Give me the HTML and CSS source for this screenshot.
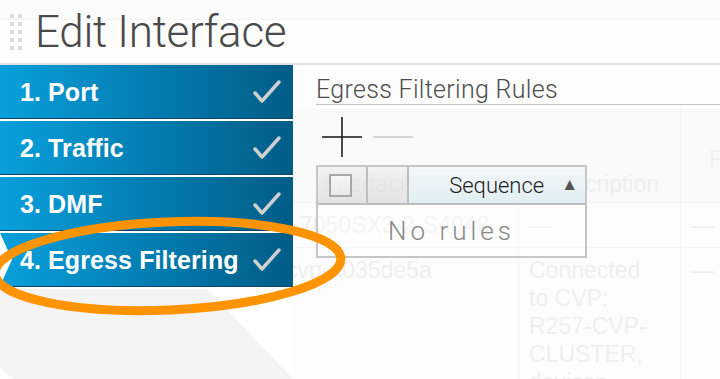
FILE: index.html
```html
<!DOCTYPE html>
<html lang="en">
<head>
    <meta charset="UTF-8" />
    <meta name="viewport" content="width=device-width, initial-scale=1.0" />
    <title>Edit Interface</title>
    <link rel="stylesheet" href="styles.css">
</head>
<body>
    <header class="page-header">
        <div class="grip">
            <span></span><span></span><span></span><span></span><span></span>
            <span></span><span></span><span></span><span></span><span></span>
        </div>
        <h1 class="page-title">Edit Interface</h1>
    </header>

    <div class="layout">
        <!-- Wizard steps -->
        <nav class="steps">
            <div class="step">
                <span class="step-label">1. Port</span>
                <svg class="step-check" width="28" height="24" viewBox="0 0 28 24"><polyline points="2,13 9,21 26,2" /></svg>
            </div>
            <div class="step">
                <span class="step-label">2. Traffic</span>
                <svg class="step-check" width="28" height="24" viewBox="0 0 28 24"><polyline points="2,13 9,21 26,2" /></svg>
            </div>
            <div class="step">
                <span class="step-label">3. DMF</span>
                <svg class="step-check" width="28" height="24" viewBox="0 0 28 24"><polyline points="2,13 9,21 26,2" /></svg>
            </div>
            <div class="step step--active">
                <span class="step-label">4. Egress Filtering</span>
                <svg class="step-check" width="28" height="24" viewBox="0 0 28 24"><polyline points="2,13 9,21 26,2" /></svg>
            </div>
            <div class="steps-fill"></div>
        </nav>

        <main class="content">
            <!-- Interface table behind the dialog -->
            <div class="backdrop">
                <div class="backdrop-head">
                    <div class="backdrop-cell backdrop-cell--name">Interface</div>
                    <div class="backdrop-cell backdrop-cell--desc">Description</div>
                    <div class="backdrop-cell backdrop-cell--last">Flow</div>
                </div>
                <div class="backdrop-row">
                    <div class="backdrop-cell">7050SX3-2-S4048</div>
                    <div class="backdrop-cell backdrop-cell--desc">—</div>
                    <div class="backdrop-cell backdrop-cell--last">—</div>
                </div>
                <div class="backdrop-row">
                    <div class="backdrop-cell backdrop-cell--shift">cvp-a035de5a</div>
                    <div class="backdrop-cell backdrop-cell--desc">Connected to CVP: R257-CVP-CLUSTER, devices</div>
                    <div class="backdrop-cell backdrop-cell--last">—</div>
                </div>
            </div>

            <!-- Egress filtering rules editor -->
            <section class="rules-panel">
                <h2 class="rules-title">Egress Filtering Rules</h2>
                <div class="rules-toolbar">
                    <svg class="tool-add" width="40" height="40" viewBox="0 0 40 40"><path d="M0 20H40M20 0V40" /></svg>
                    <svg class="tool-remove" width="40" height="40" viewBox="0 0 40 40"><path d="M0 20H40" /></svg>
                </div>
                <div class="rules-grid">
                    <div class="grid-head">
                        <div class="grid-col grid-col--check"><span class="checkbox"></span></div>
                        <div class="grid-col grid-col--blank"></div>
                        <div class="grid-col grid-col--seq">
                            <span class="seq-label">Sequence</span>
                            <span class="sort-arrow">▲</span>
                        </div>
                    </div>
                    <div class="grid-body">No rules</div>
                </div>
            </section>
        </main>
    </div>

    <!-- Annotation ring -->
    <svg class="callout" width="720" height="379" viewBox="0 0 720 379">
        <ellipse cx="168" cy="266" rx="173" ry="44" transform="rotate(-2.5 168 266)" />
    </svg>
</body>
</html>
```

FILE: styles.css
```css
/* General styles */
body {
    margin: 0;
    width: 720px;
    height: 379px;
    overflow: hidden;
    position: relative;
    background: #fdfdfd;
    font-family: "Liberation Sans", Arial, sans-serif;
}

.page-header {
    height: 63px;
    border-bottom: 2px solid #e4dfe0;
    display: flex;
    align-items: center;
    background: linear-gradient(#fbfbfb 0 19px, #f4f4f4 19px 20px, #fdfdfd 20px);
    box-sizing: content-box;
}

.grip {
    display: grid;
    grid-template-columns: 4px 4px;
    grid-auto-rows: 4px;
    gap: 4px;
    margin-left: 10px;
    margin-top: 1px;
}

.grip span {
    background: #dcdcdc;
}

.page-title {
    margin: 0 0 0 13px;
    font-family: Roboto, "Liberation Sans", sans-serif;
    font-weight: 300;
    font-size: 44px;
    color: #4a4a4a;
    letter-spacing: -0.3px;
}

.layout {
    display: flex;
    height: 314px;
}

/* Wizard steps */
.steps {
    width: 293px;
    display: flex;
    flex-direction: column;
    gap: 2px;
    background: #fff;
}

.step {
    height: 51px;
    border-bottom: 1px solid #0b4670;
    background: linear-gradient(to right, #08a0dc, #005c87);
    display: flex;
    align-items: center;
    justify-content: space-between;
    padding: 2px 12px 0 20px;
    box-sizing: content-box;
    color: #fff;
    position: relative;
}

.step-label {
    font-size: 25px;
    font-weight: 700;
    letter-spacing: 0.1px;
}

.step-check {
    margin-top: -2px;
}

.step-check polyline {
    fill: none;
    stroke: #cfcfcf;
    stroke-width: 3.5;
    stroke-linecap: round;
    stroke-linejoin: round;
}

.step--active::before {
    content: "";
    position: absolute;
    left: 0;
    top: 0;
    width: 12px;
    height: 100%;
    background: #fff;
    clip-path: polygon(0 0, 100% 50%, 0 100%);
}

.steps-fill {
    flex: 1;
    background: #f4f4f4;
    clip-path: polygon(0 0, 207px 0, 100% 100%, 14px 100%, 0 79px);
}

/* Interface table behind */
.content {
    flex: 1;
    position: relative;
    overflow: hidden;
}

.backdrop {
    padding-top: 43px;
    color: #efefef;
    font-size: 23px;
}

.backdrop-head,
.backdrop-row {
    display: grid;
    grid-template-columns: 225px 162px 1fr;
}

.backdrop-head {
    height: 94px;
    background: #fafafa;
    border-bottom: 1px solid #f3f3f3;
}

.backdrop-row {
    border-bottom: 1px solid #f5f5f5;
}

.backdrop-cell {
    padding: 8px 0 8px 7px;
    line-height: 28px;
    overflow: hidden;
    white-space: nowrap;
}

.backdrop-cell--desc,
.backdrop-cell--last {
    border-left: 1px solid #f3f3f3;
    padding-left: 10px;
}

.backdrop-row .backdrop-cell--desc {
    white-space: normal;
    width: 130px;
}

.backdrop-cell--shift {
    margin-left: -14px;
}

.backdrop-head .backdrop-cell {
    align-self: end;
    padding-bottom: 4px;
}

.backdrop-head .backdrop-cell--name {
    padding-left: 30px;
}

.backdrop-head .backdrop-cell--desc {
    padding-left: 25px;
}

.backdrop-head .backdrop-cell--last {
    align-self: stretch;
    display: flex;
    align-items: center;
    padding-left: 28px;
    padding-bottom: 0;
}

/* Rules editor */
.rules-panel {
    position: absolute;
    top: 0;
    left: 23px;
    right: 0;
}

.rules-title {
    margin: 0;
    padding-top: 11px;
    height: 28px;
    line-height: 28px;
    border-bottom: 1px solid #c4c4c4;
    font-family: Roboto, "Liberation Sans", sans-serif;
    font-weight: 300;
    font-size: 25px;
    color: #4d4d4d;
    letter-spacing: 0.3px;
}

.rules-toolbar {
    display: flex;
    gap: 11px;
    padding: 12px 0 8px 6px;
}

.tool-add path {
    stroke: #111;
    stroke-width: 1.5;
    fill: none;
}

.tool-remove path {
    stroke: #c8c8c8;
    stroke-width: 1.5;
    fill: none;
}

.rules-grid {
    width: 267px;
    border: 2px solid #c6c6c6;
}

.grid-head {
    height: 36px;
    display: flex;
    border-bottom: 2px solid #bdbdbd;
}

.grid-col {
    display: flex;
    align-items: center;
    background: linear-gradient(rgba(232, 232, 232, 0.45), rgba(205, 205, 205, 0.5));
}

.grid-col--check {
    width: 48px;
    border-right: 2px solid #bdbdbd;
    justify-content: center;
}

.grid-col--blank {
    width: 39px;
    border-right: 2px solid #bdbdbd;
}

.grid-col--seq {
    flex: 1;
    justify-content: flex-end;
    gap: 17px;
    padding-right: 7px;
    background: linear-gradient(#f2f7f9, #e2eef3);
}

.checkbox {
    width: 19px;
    height: 19px;
    border: 2px solid #a8a8a8;
    background: linear-gradient(rgba(255, 255, 255, 0.5), rgba(236, 236, 236, 0.5));
    margin-left: -4px;
}

.seq-label {
    font-family: Roboto, "Liberation Sans", sans-serif;
    font-weight: 300;
    font-size: 22px;
    color: #1e1e1e;
}

.sort-arrow {
    font-size: 17px;
    line-height: 20px;
    color: #555;
}

.grid-body {
    height: 51px;
    display: flex;
    align-items: center;
    justify-content: center;
    background: rgba(255, 255, 255, 0.35);
    font-family: Roboto, "Liberation Sans", sans-serif;
    font-weight: 300;
    font-size: 26px;
    letter-spacing: 4px;
    color: #888;
}

/* Annotation */
.callout {
    position: absolute;
    left: 0;
    top: 0;
    pointer-events: none;
}

.callout ellipse {
    fill: none;
    stroke: #ff9300;
    stroke-width: 9;
}
```
